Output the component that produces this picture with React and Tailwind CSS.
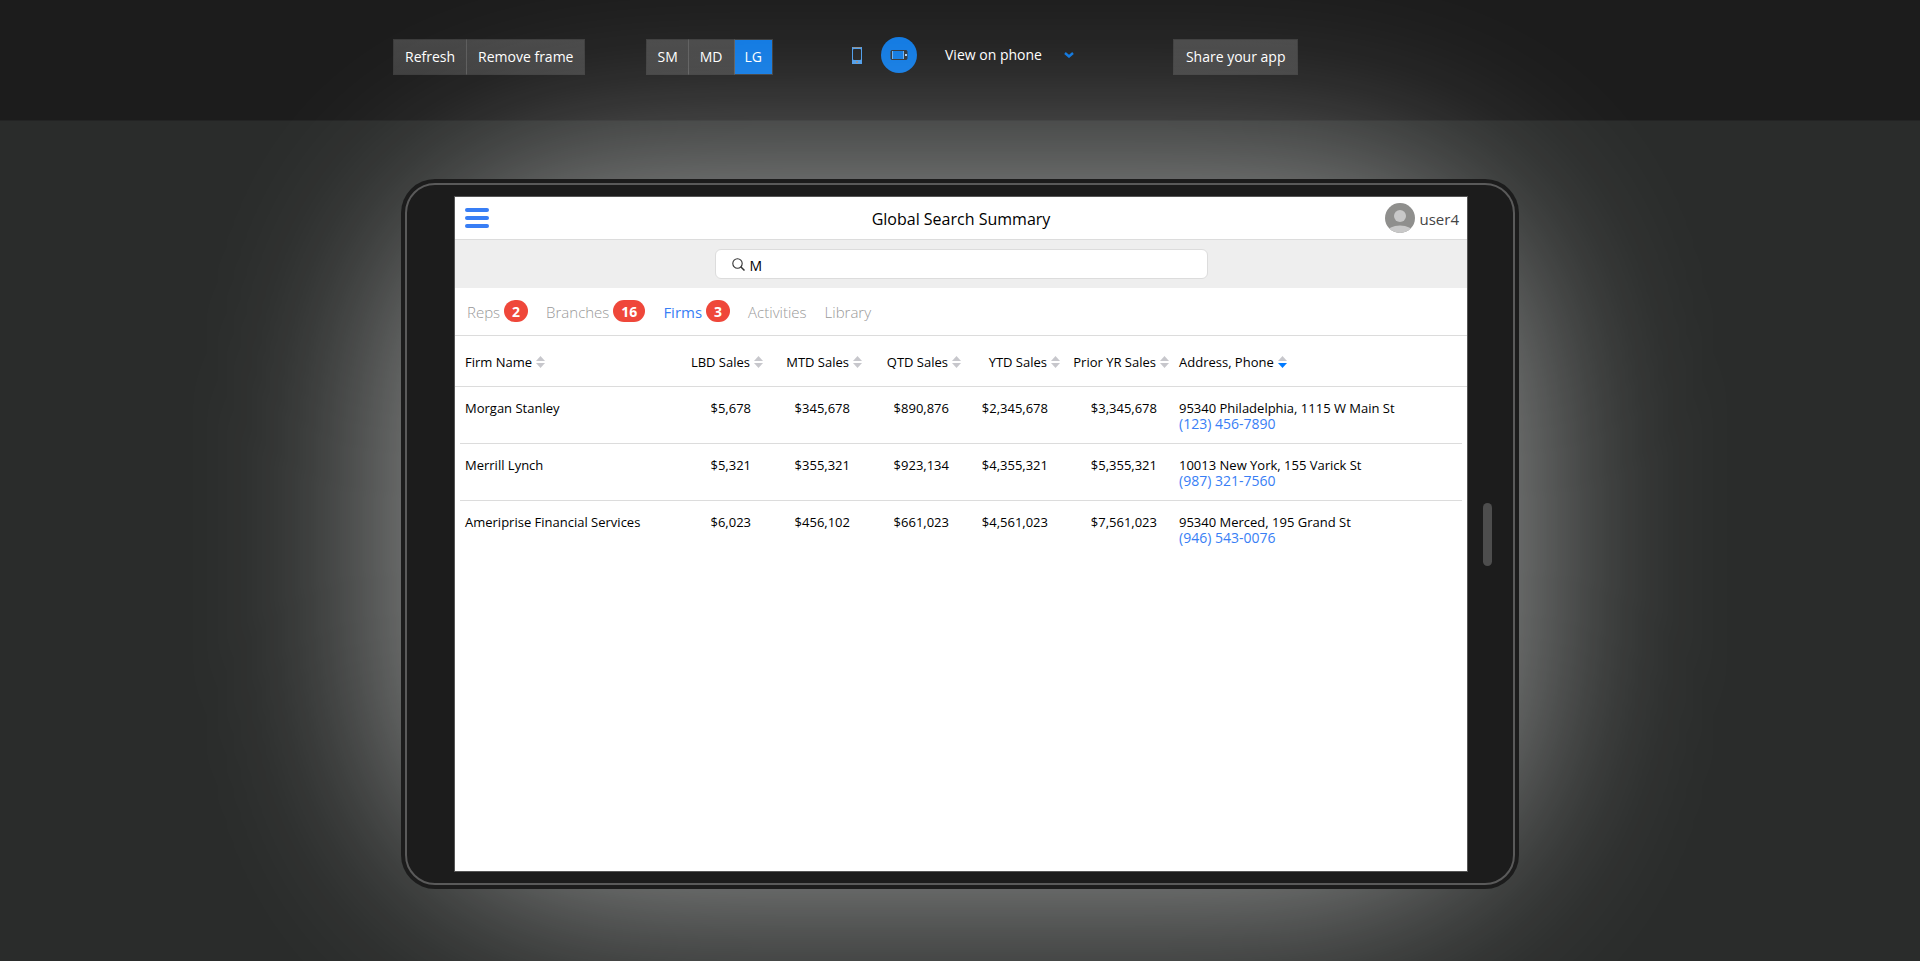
const toolButton = "h-9 border border-[#3b3b3b] text-sm leading-5 text-white";
const plain = "bg-linear-to-b from-[#464646] to-[#3e3e3e]";

const tabs = [
  { label: "Reps", count: 2 },
  { label: "Branches", count: 16 },
  { label: "Firms", count: 3, active: true },
  { label: "Activities" },
  { label: "Library" },
];

const salesColumns = ["LBD Sales", "MTD Sales", "QTD Sales", "YTD Sales", "Prior YR Sales"];

const firms = [
  {
    name: "Morgan Stanley",
    sales: ["$5,678", "$345,678", "$890,876", "$2,345,678", "$3,345,678"],
    address: "95340 Philadelphia, 1115 W Main St",
    phone: "(123) 456-7890",
  },
  {
    name: "Merrill Lynch",
    sales: ["$5,321", "$355,321", "$923,134", "$4,355,321", "$5,355,321"],
    address: "10013 New York, 155 Varick St",
    phone: "(987) 321-7560",
  },
  {
    name: "Ameriprise Financial Services",
    sales: ["$6,023", "$456,102", "$661,023", "$4,561,023", "$7,561,023"],
    address: "95340 Merced, 195 Grand St",
    phone: "(946) 543-0076",
  },
];

function SortIcon({ active }) {
  return (
    <svg width="9" height="12" viewBox="0 0 9 12" aria-hidden="true" className="shrink-0">
      <path d="M4.5 0 9 5H0z" fill="#c7c7cc" />
      <path d="M0 7h9l-4.500 5z" fill={active ? "#007aff" : "#c7c7cc"} />
    </svg>
  );
}

function SortButton({ label, active }) {
  return (
    <button className="inline-flex items-center gap-1 whitespace-nowrap">
      <span>{label}</span>
      <SortIcon active={active} />
    </button>
  );
}

function Toolbar() {
  return (
    <header className="h-[121px] border-b border-[#232424] bg-[#1c1c1c] text-white">
      <div className="mx-auto flex max-w-[1134px] items-start pt-[39px]">
        <div className="flex">
          <button className={`${toolButton} ${plain} border-r-0 px-[11px]`}>Refresh</button>
          <button className={`${toolButton} ${plain} border-l-[#5c5c5c] px-[11px]`}>Remove frame</button>
        </div>
        <div className="ml-[61px] flex">
          <button className={`${toolButton} ${plain} border-r-0 px-[10px]`}>SM</button>
          <button className={`${toolButton} ${plain} border-r-0 border-l-[#5c5c5c] px-[11px]`}>MD</button>
          <button className={`${toolButton} border-l-[#5c5c5c] bg-[#0b77e2] px-[10px]`}>LG</button>
        </div>
        <div className="-mt-[2px] ml-[79px] flex h-9 items-center">
          <button aria-label="Portrait">
            <svg width="10" height="17" viewBox="0 0 10 17">
              <rect width="10" height="17" fill="#4a9bea" />
              <path d="M1 .5h8" stroke="#8d8d8d" />
              <rect x="1" y="2" width="8" height="11" rx="1" fill="#1f1f1f" />
              <rect x="4" y="14" width="2" height="2" fill="#8d8d8d" />
            </svg>
          </button>
          <button aria-label="Landscape" className="ml-[19px] grid size-9 place-items-center rounded-full bg-[#0b77e2]">
            <svg width="18" height="12" viewBox="0 0 18 12">
              <rect x="1" y="1.500" width="16" height="9" rx="1" fill="#2d3136" stroke="#2d3136" />
              <rect x="2" y="2" width="12" height="8" fill="#69aef0" />
              <rect x="3" y="2" width="10" height="8" fill="#0b77e2" />
              <rect x="2" y="1" width="12" height="1" fill="#2d3136" />
              <rect x="15" y="5" width="2" height="2" fill="#a9d0f5" />
            </svg>
          </button>
          <button className="ml-7 flex items-center gap-[22px] text-sm leading-5">
            View on phone
            <svg width="10" height="6" viewBox="0 0 10 6" aria-hidden="true">
              <path d="M1 1l4 3.500L9 1" fill="none" stroke="#0873de" strokeWidth="2.400" />
            </svg>
          </button>
        </div>
        <button className={`${toolButton} ${plain} ml-[99px] px-3`}>Share your app</button>
      </div>
    </header>
  );
}

function AppBar() {
  return (
    <div className="grid h-[43px] grid-cols-[1fr_auto_1fr] items-center border-b border-[#dcdcdc]">
      <button aria-label="Menu" className="ml-[10px] flex w-6 flex-col gap-1">
        <span className="h-1 rounded-full bg-[#387ef5]" />
        <span className="h-1 rounded-full bg-[#387ef5]" />
        <span className="h-1 rounded-full bg-[#387ef5]" />
      </button>
      <h1 className="pt-0.5 text-base leading-6 text-black">Global Search Summary</h1>
      <div className="flex items-center justify-end gap-[5px] pr-2">
        <svg width="30" height="30" viewBox="0 0 30 30" aria-hidden="true">
          <clipPath id="avatar">
            <circle cx="15" cy="15" r="15" />
          </clipPath>
          <g clipPath="url(#avatar)">
            <rect width="30" height="30" fill="#8f8f8d" />
            <circle cx="15" cy="13" r="6" fill="#c8c8c8" />
            <ellipse cx="15" cy="29" rx="13" ry="6.500" fill="#c8c8c8" />
          </g>
        </svg>
        <span className="pt-0.5 text-[15px] leading-6 text-[#444]">user4</span>
      </div>
    </div>
  );
}

function SearchBar() {
  return (
    <div className="flex h-12 justify-center bg-[#eee] pt-[9px]">
      <label className="flex h-[30px] w-[493px] items-center gap-[5px] rounded-md border border-[#dcdcdc] bg-white px-4">
        <svg width="13" height="13" viewBox="0 0 13 13" fill="none" stroke="#333" strokeWidth="1.100" aria-hidden="true">
          <circle cx="5.500" cy="5.500" r="4.700" />
          <path d="M8.700 8.700l3.800 3.800" strokeWidth="1.500" />
        </svg>
        <input
          aria-label="Search"
          defaultValue="M"
          className="min-w-0 flex-1 bg-transparent pt-[3px] text-sm leading-5 text-black outline-none"
        />
      </label>
    </div>
  );
}

function Tabs() {
  return (
    <nav className="flex h-12 gap-[18px] border-b border-[#dcdcdc] px-3 pt-[12px]">
      {tabs.map((tab) => (
        <a
          key={tab.label}
          href="#"
          className={`flex items-start gap-1 text-[15px] ${tab.active ? "text-[#387ef5]" : "font-light text-[#999]"}`}
        >
          <span className="pt-0.5 leading-5">{tab.label}</span>
          {tab.count && (
            <span className="h-[22px] rounded-full bg-[#ef473a] px-2 text-sm leading-6 font-bold text-white">
              {tab.count}
            </span>
          )}
        </a>
      ))}
    </nav>
  );
}

function FirmTable() {
  return (
    <div className="relative px-[5px] before:absolute before:inset-x-0 before:top-[50px] before:h-px before:bg-[#dcdcdc]">
      <table className="w-full table-fixed border-separate border-spacing-0 text-[13px] leading-4 text-black">
        <colgroup>
          <col />
          <col className="w-[99px]" />
          <col className="w-[99px]" />
          <col className="w-[99px]" />
          <col className="w-[99px]" />
          <col className="w-[109px]" />
          <col className="w-[289px]" />
        </colgroup>
        <thead>
          <tr className="h-[51px]">
            <th className="pl-[5px] text-left font-normal">
              <SortButton label="Firm Name" />
            </th>
            {salesColumns.map((label) => (
              <th key={label} className="pr-1 text-right font-normal">
                <SortButton label={label} />
              </th>
            ))}
            <th className="pl-[6px] text-left font-normal">
              <SortButton label="Address, Phone" active />
            </th>
          </tr>
        </thead>
        <tbody>
          {firms.map((firm) => (
            <tr
              key={firm.name}
              className="h-[57px] align-top [&>td]:border-b [&>td]:border-[#dcdcdc] [&>td]:pt-[13px] last:[&>td]:border-b-0"
            >
              <td className="pl-[5px]">{firm.name}</td>
              {firm.sales.map((value, i) => (
                <td key={salesColumns[i]} className="pr-4 text-right">
                  {value}
                </td>
              ))}
              <td className="pl-[6px]">
                {firm.address}
                <a href="#" className="block w-fit text-sm leading-4 text-[#387ef5]">
                  {firm.phone}
                </a>
              </td>
            </tr>
          ))}
        </tbody>
      </table>
    </div>
  );
}

export default function App() {
  return (
    <div className="min-h-screen overflow-hidden bg-[#2a2c2b] font-['Open_Sans','Noto_Sans',sans-serif]">
      <Toolbar />
      <main className="relative mx-auto mt-[58px] mb-[72px] max-w-[1118px]">
        <div className="pointer-events-none absolute inset-0 rounded-[200px] bg-white/56 blur-[100px]" />
        <div className="relative rounded-[34px] bg-[#1c1c1c] p-1">
          <div className="flex rounded-[30px] border-2 border-[#5a5a5a] py-[11px] pl-[47px]">
            <section className="min-h-[676px] flex-1 border border-[#555] bg-white">
              <AppBar />
              <SearchBar />
              <Tabs />
              <FirmTable />
            </section>
            <div className="flex w-[45px] items-center pl-[15px]">
              <div className="h-[63px] w-[9px] rounded-full bg-[#4d4d4d]" />
            </div>
          </div>
        </div>
      </main>
    </div>
  );
}
